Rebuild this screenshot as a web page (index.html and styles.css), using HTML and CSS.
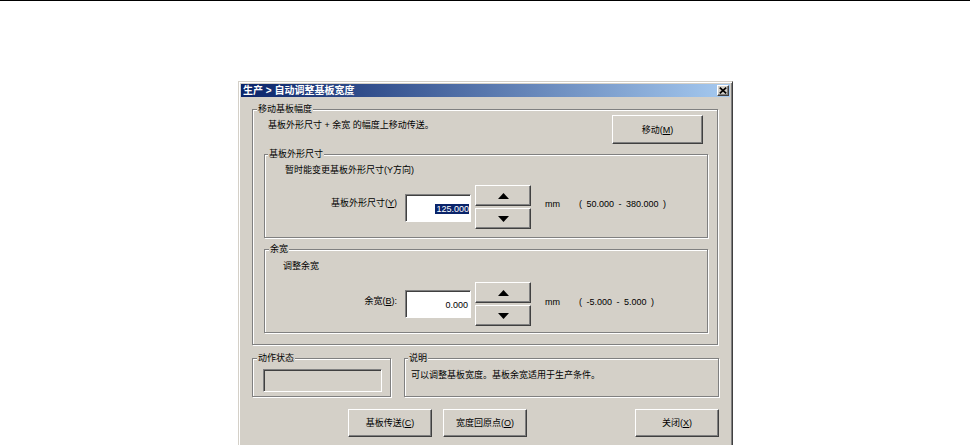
FILE: index.html
```html
<!DOCTYPE html>
<html lang="zh-CN">
<head>
<meta charset="utf-8">
<title>自动调整基板宽度</title>
<link rel="stylesheet" href="styles.css">
</head>
<body>
<div class="topline"></div>
<div class="stage">
  <div class="dialog">
    <div class="titlebar">
      <span class="title">生产 &gt; 自动调整基板宽度</span>
      <button class="close-btn" aria-label="关闭">
        <svg width="8" height="7" viewBox="0 0 8 7"><path d="M0.8 0.6 L7.2 6.4 M7.2 0.6 L0.8 6.4" stroke="#000" stroke-width="1.7"/></svg>
      </button>
    </div>
    <div class="client">
      <section class="group group-main">
        <div class="group-label lbl-main">移动基板幅度</div>
        <div class="main-row">
          <p class="main-text">基板外形尺寸 + 余宽 的幅度上移动传送。</p>
          <button class="btn btn-move">移动(<u>M</u>)</button>
        </div>

        <section class="group group-inner group-size">
          <div class="group-label lbl-size">基板外形尺寸</div>
          <p class="hint hint-size">暂时能变更基板外形尺寸(Y方向)</p>
          <div class="field-row row-size">
            <label class="field-label">基板外形尺寸(<u>Y</u>)</label>
            <div class="input"><span class="sel">125.000</span></div>
            <div class="spin">
              <button class="btn spin-btn" aria-label="增加"><svg width="11" height="6" viewBox="0 0 11 6"><polygon points="0,6 5.5,0 11,6" fill="#000"/></svg></button>
              <button class="btn spin-btn" aria-label="减少"><svg width="11" height="6" viewBox="0 0 11 6"><polygon points="0,0 11,0 5.5,6" fill="#000"/></svg></button>
            </div>
            <span class="unit">mm</span>
            <span class="range">( 50.000 - 380.000 )</span>
          </div>
        </section>

        <section class="group group-inner group-gap">
          <div class="group-label lbl-gap">余宽</div>
          <p class="hint hint-gap">调整余宽</p>
          <div class="field-row row-gap">
            <label class="field-label">余宽(<u>B</u>):</label>
            <div class="input"><span class="val">0.000</span></div>
            <div class="spin">
              <button class="btn spin-btn" aria-label="增加"><svg width="11" height="6" viewBox="0 0 11 6"><polygon points="0,6 5.5,0 11,6" fill="#000"/></svg></button>
              <button class="btn spin-btn" aria-label="减少"><svg width="11" height="6" viewBox="0 0 11 6"><polygon points="0,0 11,0 5.5,6" fill="#000"/></svg></button>
            </div>
            <span class="unit">mm</span>
            <span class="range">( -5.000 - 5.000 )</span>
          </div>
        </section>
      </section>

      <div class="bottom-row">
        <section class="group group-status">
          <div class="group-label lbl-status">动作状态</div>
          <div class="status-box"></div>
        </section>
        <section class="group group-note">
          <div class="group-label lbl-note">说明</div>
          <p class="note-text">可以调整基板宽度。基板余宽适用于生产条件。</p>
        </section>
      </div>

      <div class="button-row">
        <button class="btn btn-cmd btn-transfer">基板传送(<u>C</u>)</button>
        <button class="btn btn-cmd btn-origin">宽度回原点(<u>O</u>)</button>
        <button class="btn btn-cmd btn-close">关闭(<u>X</u>)</button>
      </div>
    </div>
  </div>
</div>
</body>
</html>
```

FILE: styles.css
```css
html, body {
  margin: 0;
  padding: 0;
  overflow: hidden;
  background: #fff;
}

body {
  font-family: "Liberation Sans", "Noto Sans CJK SC", sans-serif;
  font-size: 9px;
  line-height: 12px;
  color: #000;
}

p { margin: 0; }

.topline {
  height: 1px;
  background: #000;
}

.stage {
  padding: 80px 0 0 238px;
}

/* window frame */
.dialog {
  box-sizing: border-box;
  width: 495px;
  height: 372px;
  background: #d4d0c8;
  border: 1px solid;
  border-color: #d4d0c8 #404040 #404040 #d4d0c8;
  box-shadow: inset 1px 1px 0 #fff, inset -1px -1px 0 #808080;
  padding: 2px;
}

.titlebar {
  height: 13px;
  display: flex;
  align-items: center;
  justify-content: space-between;
  padding: 0 1px 0 2px;
  background: linear-gradient(to right, #0a246a, #a6caf0);
}

.title {
  color: #fff;
  font-weight: bold;
  font-size: 10px;
  line-height: 13px;
  white-space: pre;
}

.close-btn {
  box-sizing: border-box;
  width: 12px;
  height: 11px;
  padding: 0;
  display: flex;
  align-items: center;
  justify-content: center;
  background: #d4d0c8;
  border: 1px solid;
  border-color: #fff #404040 #404040 #fff;
  box-shadow: inset -1px -1px 0 #808080;
}

.client {
  padding: 12px 0 0 11px;
  display: flex;
  flex-direction: column;
  align-items: flex-start;
}

/* etched group box */
.group {
  box-sizing: border-box;
  border: 1px solid #808080;
  box-shadow: inset 1px 1px 0 #fff, 1px 1px 0 #fff;
  display: flex;
  flex-direction: column;
  align-items: flex-start;
}

.group-label {
  margin-top: -7px;
  padding: 0 1px;
  background: #d4d0c8;
  line-height: 12px;
  white-space: nowrap;
}

.lbl-main { margin-left: 4px; }
.lbl-size { margin-left: 3px; }
.lbl-gap { margin-left: 4px; }
.lbl-status { margin-left: 4px; }
.lbl-note { margin-left: 3px; }

.group-main {
  width: 466px;
  height: 236px;
}

.main-row {
  align-self: stretch;
  display: flex;
  align-items: flex-start;
  justify-content: space-between;
  margin: 0 14px 0 15px;
}

.main-text {
  margin-top: 4px;
  white-space: pre;
}

/* classic raised button */
.btn {
  box-sizing: border-box;
  font: inherit;
  color: #000;
  padding: 0;
  background: #d4d0c8;
  border: 1px solid;
  border-color: #fff #404040 #404040 #fff;
  box-shadow: inset -1px -1px 0 #808080;
  display: flex;
  align-items: center;
  justify-content: center;
  white-space: nowrap;
}

.btn-move {
  width: 91px;
  height: 29px;
}

.group-inner {
  width: 444px;
  height: 84px;
  margin-left: 11px;
}

.group-size { margin-top: 10px; }
.group-gap { margin-top: 11px; }

.hint-size { margin: 4px 0 0 20px; }
.hint-gap { margin: 5px 0 0 18px; }

.field-row {
  display: flex;
  align-items: flex-start;
}

.row-size { margin-top: 9px; }
.row-gap { margin-top: 10px; }

.field-label {
  width: 132px;
  text-align: right;
  white-space: nowrap;
}

.input {
  box-sizing: border-box;
  width: 66px;
  height: 28px;
  margin-left: 8px;
  background: #fff;
  border: 1px solid;
  border-color: #808080 #fff #fff #808080;
  box-shadow: inset 1px 1px 0 #404040;
  display: flex;
  align-items: center;
  justify-content: flex-end;
  padding: 1px 1px 0 0;
}

.sel {
  background: #0a246a;
  color: #fff;
  line-height: 10px;
  padding: 0 0 0 1px;
}

.val {
  line-height: 10px;
  padding-right: 1px;
}

.spin {
  width: 56px;
  margin-left: 4px;
  display: flex;
  flex-direction: column;
  gap: 2px;
}

.spin-btn {
  width: 56px;
  height: 21px;
}

.unit {
  width: 34px;
  margin-left: 14px;
}

.range {
  white-space: pre;
  word-spacing: 2px;
}

.row-size .field-label { margin-top: 12px; }
.row-size .input { margin-top: 9px; }
.row-size .unit,
.row-size .range { margin-top: 13px; }

.row-gap .field-label { margin-top: 13px; }
.row-gap .input { margin-top: 8px; }
.row-gap .unit,
.row-gap .range { margin-top: 14px; }

/* bottom area */
.bottom-row {
  display: flex;
  margin-top: 13px;
}

.group-status {
  width: 139px;
  height: 39px;
}

.status-box {
  box-sizing: border-box;
  width: 119px;
  height: 23px;
  margin: 5px 0 0 10px;
  border: 1px solid;
  border-color: #808080 #fff #fff #808080;
  box-shadow: inset 1px 1px 0 #404040;
}

.group-note {
  width: 315px;
  height: 39px;
  margin-left: 13px;
}

.note-text {
  margin: 5px 0 0 6px;
  white-space: nowrap;
}

.button-row {
  display: flex;
  margin-top: 12px;
}

.btn-cmd {
  width: 84px;
  height: 28px;
}

.btn-transfer { margin-left: 96px; }
.btn-origin { margin-left: 11px; }
.btn-close { margin-left: 108px; }
```
